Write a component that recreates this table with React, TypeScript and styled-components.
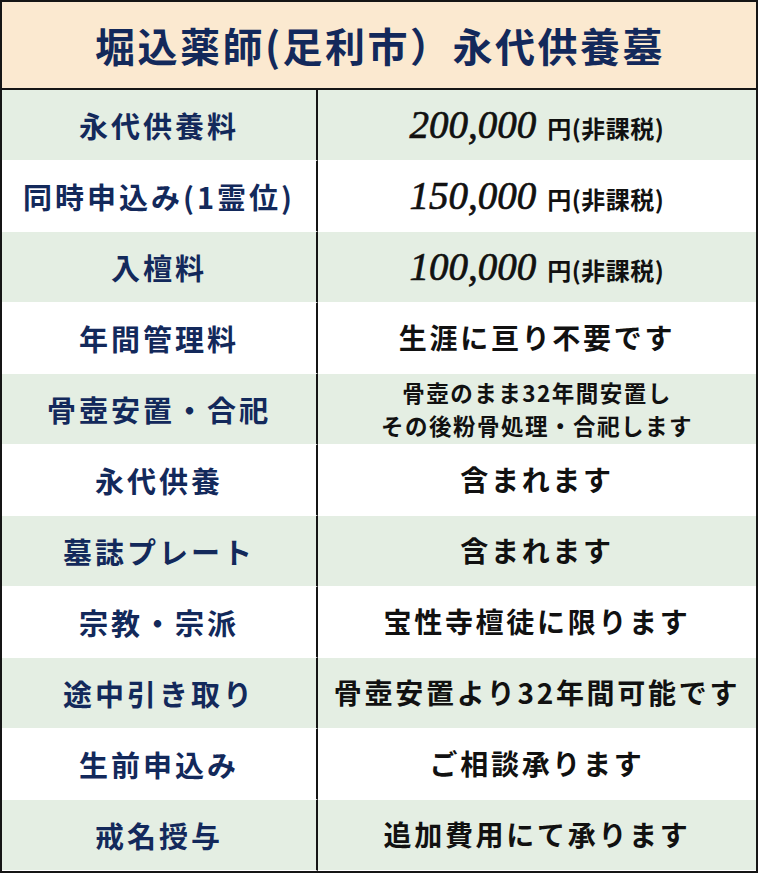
import React from "react";
import styled, { createGlobalStyle } from "styled-components";

const GlobalStyle = createGlobalStyle`
  html, body { margin: 0; padding: 0; background: #ffffff; }
  body { font-family: "Noto Sans CJK JP", "Noto Sans", sans-serif; }
`;

const Table = styled.div`
  box-sizing: border-box;
  width: 758px;
  display: grid;
  grid-template-columns: 316px 1fr;
  border: 2px solid #151515;
  background: #ffffff;
`;

const Header = styled.div`
  grid-column: 1 / span 2;
  height: 86px;
  background: #fbe9d0;
  border-bottom: 2px solid #151515;
  display: flex;
  align-items: center;
  justify-content: center;
  font-family: "Noto Sans CJK JP", sans-serif;
  font-weight: 700;
  font-size: 40px;
  letter-spacing: 2.5px;
  color: #13295b;
  padding-left: 2px;
`;

const Cell = styled.div<{ $shade: boolean }>`
  box-sizing: border-box;
  height: 71px;
  background: ${(p) => (p.$shade ? "#e4eee3" : "#ffffff")};
  border-bottom: 1px solid #ffffff;
  display: flex;
  flex-direction: column;
  align-items: center;
  justify-content: center;
  text-align: center;
`;

const LabelCell = styled(Cell)`
  border-right: 2px solid #151515;
  color: #13295b;
  font-weight: 700;
  font-size: 29px;
  letter-spacing: 3px;
`;

const ValueCell = styled(Cell)<{ $small?: boolean }>`
  color: #111111;
  font-weight: 700;
  font-size: ${(p) => (p.$small ? "22.5px" : "28px")};
  letter-spacing: ${(p) => (p.$small ? "1.5px" : "2.7px")};
  line-height: ${(p) => (p.$small ? "33px" : "1.2")};
`;

const PriceLine = styled.div`
  display: flex;
  align-items: baseline;
  gap: 11px;
  letter-spacing: 0;
`;

const Amount = styled.span`
  font-family: "Liberation Serif", "Times New Roman", serif;
  font-style: italic;
  font-weight: 400;
  font-size: 39px;
  color: #111111;
  -webkit-text-stroke: 0.7px #111111;
`;

const Tax = styled.span`
  font-family: "Noto Sans CJK JP", sans-serif;
  font-weight: 700;
  font-size: 24px;
  letter-spacing: 0.5px;
  color: #111111;
`;

type Row = {
  label: string;
  price?: string;
  value?: string[];
  small?: boolean;
};

const rows: Row[] = [
  { label: "永代供養料", price: "200,000" },
  { label: "同時申込み(1霊位)", price: "150,000" },
  { label: "入檀料", price: "100,000" },
  { label: "年間管理料", value: ["生涯に亘り不要です"] },
  {
    label: "骨壺安置・合祀",
    value: ["骨壺のまま32年間安置し", "その後粉骨処理・合祀します"],
    small: true,
  },
  { label: "永代供養", value: ["含まれます"] },
  { label: "墓誌プレート", value: ["含まれます"] },
  { label: "宗教・宗派", value: ["宝性寺檀徒に限ります"] },
  { label: "途中引き取り", value: ["骨壺安置より32年間可能です"] },
  { label: "生前申込み", value: ["ご相談承ります"] },
  { label: "戒名授与", value: ["追加費用にて承ります"] },
];

export default function App() {
  return (
    <>
      <GlobalStyle />
      <Table>
        <Header>堀込薬師(足利市）永代供養墓</Header>
        {rows.map((r, i) => {
          const shade = i % 2 === 0;
          return (
            <React.Fragment key={r.label}>
              <LabelCell $shade={shade}>{r.label}</LabelCell>
              <ValueCell $shade={shade} $small={r.small}>
                {r.price ? (
                  <PriceLine>
                    <Amount>{r.price}</Amount>
                    <Tax>円(非課税)</Tax>
                  </PriceLine>
                ) : (
                  r.value!.map((v) => <div key={v}>{v}</div>)
                )}
              </ValueCell>
            </React.Fragment>
          );
        })}
      </Table>
    </>
  );
}
